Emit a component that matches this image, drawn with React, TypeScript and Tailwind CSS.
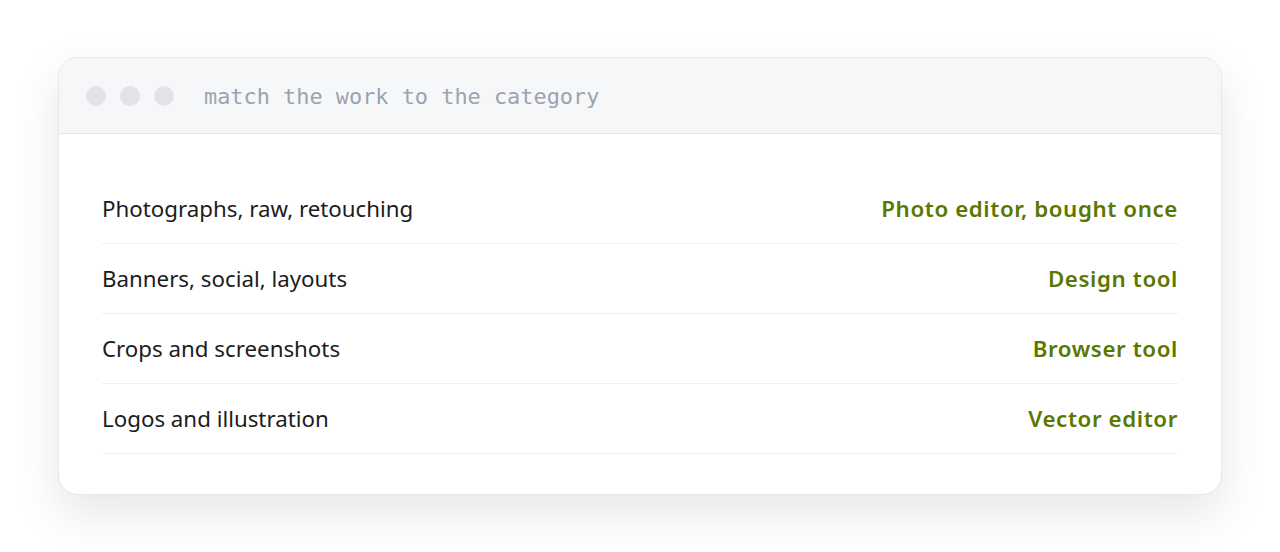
import React from "react";

const rows = [
  ["Photographs, raw, retouching", "Photo editor, bought once"],
  ["Banners, social, layouts", "Design tool"],
  ["Crops and screenshots", "Browser tool"],
  ["Logos and illustration", "Vector editor"],
];

export default function App() {
  return (
    <div className="w-[1280px] h-[552px] bg-white px-[58px] pt-[57px]" style={{ fontFamily: '"Noto Sans", "Open Sans", sans-serif' }}>
      <div className="rounded-[20px] border border-[#e5e7eb] bg-white overflow-hidden shadow-[0_18px_48px_rgba(0,0,0,0.10)]">
        <div className="h-[76px] bg-[#f6f7f9] border-b border-[#e3e5e8] flex items-center pl-[27px]">
          <div className="flex gap-[14px]">
            <span className="w-[20px] h-[20px] rounded-full bg-[#e1e3e6]" />
            <span className="w-[20px] h-[20px] rounded-full bg-[#e1e3e6]" />
            <span className="w-[20px] h-[20px] rounded-full bg-[#e1e3e6]" />
          </div>
          <span className="ml-[30px] mt-[3px] text-[21.9px] text-[#9ca3af]" style={{ fontFamily: '"DejaVu Sans Mono", monospace' }}>
            match the work to the category
          </span>
        </div>
        <div className="px-[43px] pt-[40px] pb-[40px]">
          {rows.map(([l, r]) => (
            <div key={l} className="h-[70px] flex items-center justify-between border-b border-[#eeeff1] pt-[1px]">
              <span className="text-[#1c1c1c] text-[22.3px]">{l}</span>
              <span className="text-[#5a7800] font-semibold text-[22.3px] tracking-[0.6px]">{r}</span>
            </div>
          ))}
        </div>
      </div>
    </div>
  );
}
